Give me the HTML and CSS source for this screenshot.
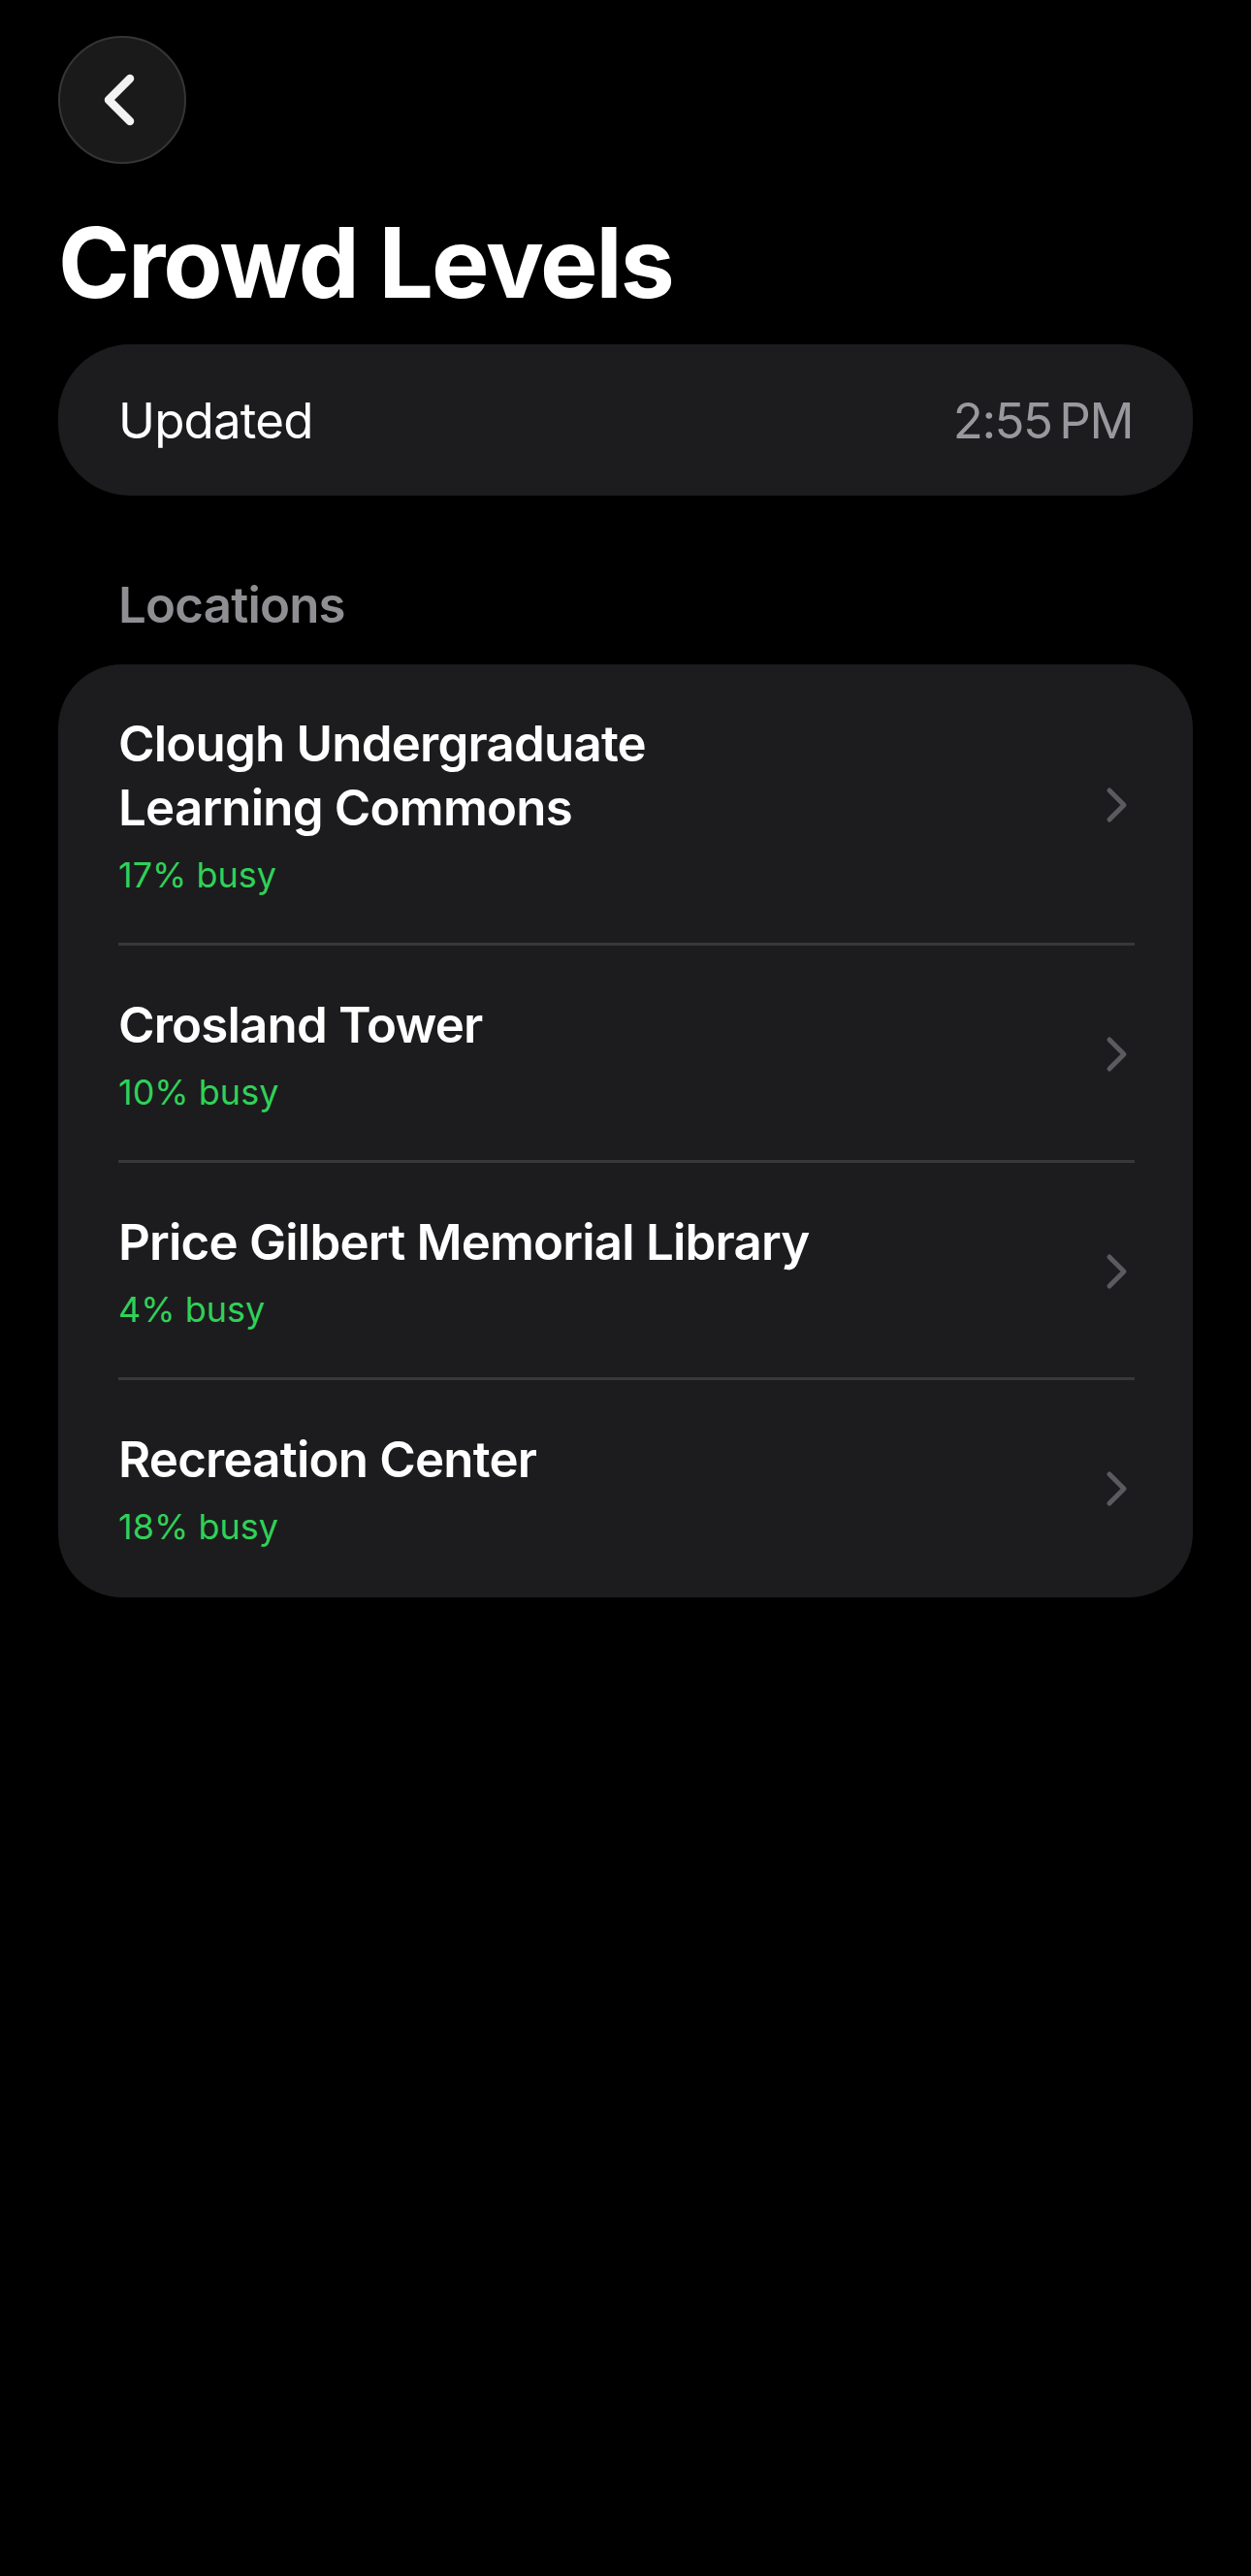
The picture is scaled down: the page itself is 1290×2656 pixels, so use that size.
FILE: index.html
```html
<!DOCTYPE html>
<html lang="en">
<head>
  <meta charset="UTF-8">
  <title>Crowd Levels</title>
  <link rel="stylesheet" href="styles.css">
</head>
<body>

  <div class="screen">
    <button class="back-btn" aria-label="Back">
      <svg width="40" height="60" viewBox="0 0 40 60">
        <path d="M32 8 L10 30 L32 52" fill="none" stroke="#f2f2f2" stroke-width="8.5" stroke-linecap="round" stroke-linejoin="round"/>
      </svg>
    </button>

    <h1 class="title">Crowd Levels</h1>

    <div class="updated">
      <span>Updated</span>
      <span class="time">2:55&#8239;PM</span>
    </div>

    <h2 class="section-header">Locations</h2>

    <div class="list">
      <div class="row">
        <div class="row-text">
          <div class="row-title">Clough Undergraduate<br>Learning Commons</div>
          <div class="row-sub">17% busy</div>
        </div>
        <svg class="chevron" width="24" height="38" viewBox="0 0 24 38">
          <path d="M4 4 L19 19 L4 34" fill="none" stroke="#5b5b5f" stroke-width="5" stroke-linecap="round" stroke-linejoin="round"/>
        </svg>
      </div>
      <div class="row">
        <div class="row-text">
          <div class="row-title">Crosland Tower</div>
          <div class="row-sub">10% busy</div>
        </div>
        <svg class="chevron" width="24" height="38" viewBox="0 0 24 38">
          <path d="M4 4 L19 19 L4 34" fill="none" stroke="#5b5b5f" stroke-width="5" stroke-linecap="round" stroke-linejoin="round"/>
        </svg>
      </div>
      <div class="row">
        <div class="row-text">
          <div class="row-title">Price Gilbert Memorial Library</div>
          <div class="row-sub">4% busy</div>
        </div>
        <svg class="chevron" width="24" height="38" viewBox="0 0 24 38">
          <path d="M4 4 L19 19 L4 34" fill="none" stroke="#5b5b5f" stroke-width="5" stroke-linecap="round" stroke-linejoin="round"/>
        </svg>
      </div>
      <div class="row">
        <div class="row-text">
          <div class="row-title">Recreation Center</div>
          <div class="row-sub">18% busy</div>
        </div>
        <svg class="chevron" width="24" height="38" viewBox="0 0 24 38">
          <path d="M4 4 L19 19 L4 34" fill="none" stroke="#5b5b5f" stroke-width="5" stroke-linecap="round" stroke-linejoin="round"/>
        </svg>
      </div>
    </div>
  </div>

</body>
</html>
```

FILE: styles.css
```css
body {
  font-family: Inter, 'Liberation Sans', sans-serif;
  background-color: #000;
  color: #fff;
  margin: 0;
}

.screen {
  padding: 37px 60px 0;
}

.back-btn {
  display: flex;
  align-items: center;
  justify-content: center;
  width: 132px;
  height: 132px;
  padding: 0 8px 0 0;
  border-radius: 50%;
  background-color: #1a1a1b;
  border: 2px solid #353537;
  cursor: pointer;
}

.title {
  margin: 42px 0 0;
  font-size: 100px;
  line-height: 120px;
  font-weight: 700;
  letter-spacing: -2px;
}

.updated {
  display: flex;
  justify-content: space-between;
  align-items: center;
  margin-top: 24px;
  height: 156px;
  padding: 0 62px;
  background-color: #1c1c1e;
  border-radius: 74px;
  font-size: 51px;
  letter-spacing: -0.8px;
}

.updated .time {
  color: #98989e;
  letter-spacing: -1.5px;
}

.section-header {
  margin: 80px 0 0;
  padding-left: 62px;
  font-size: 51px;
  line-height: 66px;
  font-weight: 600;
  letter-spacing: -0.8px;
  color: #8e8e93;
}

.list {
  margin-top: 28px;
  background-color: #1c1c1e;
  border-radius: 66px;
}

.row {
  display: flex;
  align-items: center;
  justify-content: space-between;
  margin: 0 60px 0 62px;
  padding: 49px 6px 46px 0;
  border-bottom: 3px solid #38383a;
}

.row:last-child {
  border-bottom: none;
  padding-bottom: 49px;
}

.row-title {
  font-size: 51px;
  line-height: 66px;
  font-weight: 600;
  letter-spacing: -0.8px;
}

.row-sub {
  margin-top: 12px;
  font-size: 36px;
  line-height: 48px;
  color: #30d158;
}
```
